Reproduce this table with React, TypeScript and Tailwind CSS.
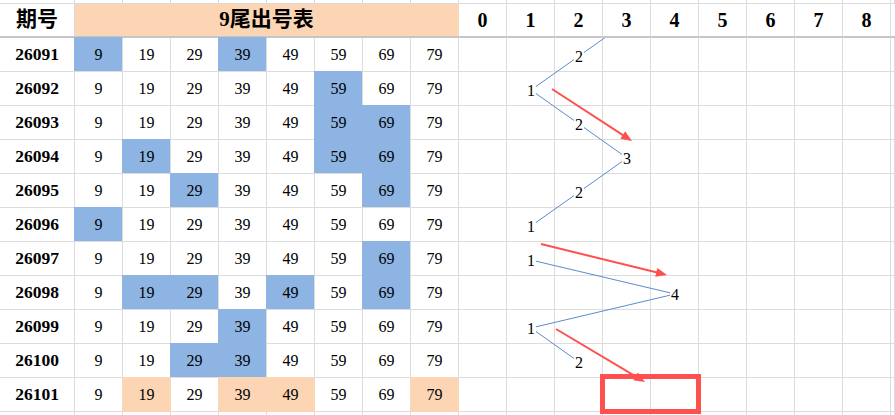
const tails = [9, 19, 29, 39, 49, 59, 69, 79];

type Row = { id: string; hit: number[]; peach?: boolean };

const rows: Row[] = [
  { id: "26091", hit: [9, 39] },
  { id: "26092", hit: [59] },
  { id: "26093", hit: [59, 69] },
  { id: "26094", hit: [19, 59, 69] },
  { id: "26095", hit: [29, 69] },
  { id: "26096", hit: [9] },
  { id: "26097", hit: [69] },
  { id: "26098", hit: [19, 29, 49, 69] },
  { id: "26099", hit: [39] },
  { id: "26100", hit: [29, 39] },
  { id: "26101", hit: [19, 39, 49, 79], peach: true },
];

const line = "border-r border-b border-[#dcdcdc]";
const blue = "bg-[#8db4e2] border-[#8db4e2] shadow-[-1px_-1px_0_#8db4e2]";
const peach = "bg-[#fcd5b4] border-[#fcd5b4] shadow-[-1px_-1px_0_#fcd5b4]";

// label centre for a value in a body row
const pt = (row: number, v: number) => ({ x: 483 + 48 * v, y: 56 + 34 * row });

function Arrow({ x1, y1, x2, y2 }: { x1: number; y1: number; x2: number; y2: number }) {
  const len = Math.hypot(x2 - x1, y2 - y1);
  const ux = (x2 - x1) / len;
  const uy = (y2 - y1) / len;
  const bx = x2 - ux * 11;
  const by = y2 - uy * 11;
  const head = `${x2},${y2} ${bx - uy * 4.5},${by + ux * 4.5} ${bx + uy * 4.5},${by - ux * 4.5}`;
  return (
    <g>
      <line x1={x1} y1={y1} x2={x2 - ux * 8} y2={y2 - uy * 8} stroke="#ff5050" strokeWidth={2} />
      <polygon points={head} fill="#ff5050" />
    </g>
  );
}

function Chart() {
  const counts = rows.slice(0, 10).map((r) => r.hit.length);
  const segs: [number, number, number, number][] = [];
  const prev = pt(-1, 3);
  const first = pt(0, counts[0]);
  segs.push([prev.x, prev.y, first.x, first.y]);
  counts.forEach((c, i) => {
    if (i === counts.length - 1 || i === 5) return;
    const a = pt(i, c);
    const b = pt(i + 1, counts[i + 1]);
    segs.push([a.x, a.y, b.x, b.y]);
  });

  return (
    <svg className="pointer-events-none absolute left-0 top-0" width={895} height={415}>
      <defs>
        <clipPath id="body">
          <rect x={459} y={38} width={436} height={377} />
        </clipPath>
      </defs>
      <g clipPath="url(#body)">
        {segs.map(([x1, y1, x2, y2], i) => (
          <line key={i} x1={x1} y1={y1} x2={x2} y2={y2} stroke="#5b8bd1" strokeWidth={1} />
        ))}
        {counts.map((c, i) => {
          const p = pt(i, c);
          return (
            <g key={i}>
              <rect x={p.x - 5} y={p.y - 7} width={10} height={14} fill="#fff" />
              <text
                x={p.x}
                y={p.y + 5.5}
                textAnchor="middle"
                fontFamily="Liberation Serif, serif"
                fontSize={16}
                fill="#000"
              >
                {c}
              </text>
            </g>
          );
        })}
      </g>
      <Arrow x1={552} y1={89} x2={632} y2={141} />
      <Arrow x1={541} y1={244} x2={667} y2={275} />
      <Arrow x1={556} y1={329} x2={645} y2={382} />
      <rect x={602.5} y={376.5} width={96} height={35} fill="none" stroke="#ff5050" strokeWidth={5} />
    </svg>
  );
}

export default function App() {
  const blank = Array.from({ length: 19 });

  return (
    <div className="relative h-[415px] w-[895px] overflow-hidden bg-white font-['Liberation_Serif','Noto_Sans_CJK_SC',serif] text-black">
      <div className="grid h-full grid-cols-[75px_repeat(17,48px)_1fr] grid-rows-[4px_34px_repeat(11,34px)_1fr]">
        {blank.map((_, i) => (
          <div key={`t${i}`} className={line} />
        ))}

        <div className="flex items-center justify-center border-r border-b-2 border-r-[#dcdcdc] border-b-[#c6c6c6] text-[21px] font-bold">
          期号
        </div>
        <div className="col-span-8 flex items-center justify-center border-r border-b-2 border-r-[#fcd5b4] border-b-[#c6c6c6] bg-[#fcd5b4] text-[21px] font-bold">
          9尾出号表
        </div>
        {Array.from({ length: 9 }).map((_, d) => (
          <div
            key={`h${d}`}
            className="flex items-center justify-center border-r border-b-2 border-r-[#dcdcdc] border-b-[#c6c6c6] text-[20px] font-bold"
          >
            {d}
          </div>
        ))}
        <div className="border-b-2 border-b-[#c6c6c6]" />

        {rows.map((r) => (
          <div key={r.id} className="contents">
            <div className={`flex items-center justify-center text-[17.5px] font-bold ${line}`}>{r.id}</div>
            {tails.map((t) => (
              <div
                key={t}
                className={`flex items-center justify-center text-[16px] ${line} ${
                  r.hit.includes(t) ? (r.peach ? peach : blue) : ""
                }`}
              >
                {t}
              </div>
            ))}
            {Array.from({ length: 9 }).map((_, d) => (
              <div key={d} className={line} />
            ))}
            <div className={line} />
          </div>
        ))}

        {blank.map((_, i) => (
          <div key={`b${i}`} className="border-r border-[#dcdcdc]" />
        ))}
      </div>
      <Chart />
    </div>
  );
}
